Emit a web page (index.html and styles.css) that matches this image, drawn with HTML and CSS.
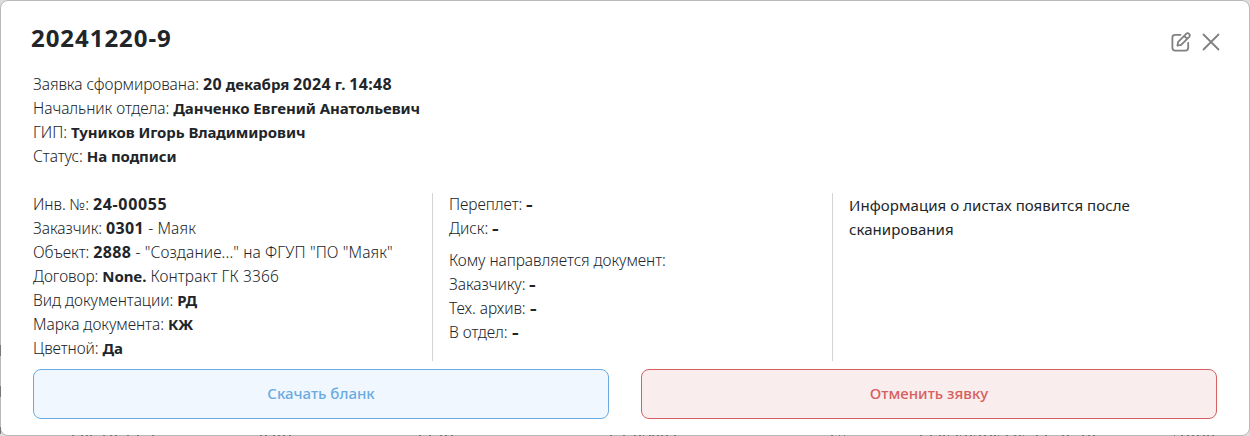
FILE: index.html
```html
<!DOCTYPE html>
<html lang="ru">
<head>
<meta charset="utf-8">
<title>20241220-9</title>
<link rel="stylesheet" href="styles.css">
</head>
<body>
<main class="modal">
  <header class="head">
    <h1 class="title">20241220-9</h1>
    <div class="tools">
      <svg class="edit" viewBox="0 0 20 20"><path d="M9.5 2.8H4.2Q1.4 2.8 1.4 5.6V15.8Q1.4 18.6 4.2 18.6H14.4Q17.2 18.6 17.2 15.8V10.8"/><path d="M6.4 13.6L7.2 9.8L15.2 1.8Q16.7.5 18.1 1.9Q19.5 3.3 18.2 4.8L10.2 12.8ZM13.2 3.8L16.2 6.8"/></svg>
      <svg class="close" viewBox="0 0 18 18"><path d="M1.5 1.5L16.5 16.5M16.5 1.5L1.5 16.5"/></svg>
    </div>
  </header>
  <section class="summary">
    <p class="row">Заявка сформирована: <b><span class="num">20</span> декабря <span class="num">2024</span> г. <span class="num">14:48</span></b></p>
    <p class="row">Начальник отдела: <b>Данченко Евгений Анатольевич</b></p>
    <p class="row">ГИП: <b>Туников Игорь Владимирович</b></p>
    <p class="row">Статус: <b>На подписи</b></p>
  </section>
  <section class="details">
    <div class="col">
      <p class="row">Инв. №: <b class="num code">24-00055</b></p>
      <p class="row">Заказчик: <b class="num">0301</b><span class="object"> - Маяк</span></p>
      <p class="row">Объект: <b class="num">2888</b><span class="object"> - "Создание..." на ФГУП "ПО "Маяк"</span></p>
      <p class="row">Договор: <b>None.</b><span class="object"> Контракт ГК 3366</span></p>
      <p class="row">Вид документации: <b>РД</b></p>
      <p class="row">Марка документа: <b>КЖ</b></p>
      <p class="row">Цветной: <b>Да</b></p>
    </div>
    <div class="col">
      <p class="row">Переплет: <b class="dash">-</b></p>
      <p class="row">Диск: <b class="dash">-</b></p>
      <p class="row group">Кому направляется документ:</p>
      <p class="row">Заказчику: <b class="dash">-</b></p>
      <p class="row">Тех. архив: <b class="dash">-</b></p>
      <p class="row">В отдел: <b class="dash">-</b></p>
    </div>
    <div class="col info">Информация о листах появится после<br>сканирования</div>
  </section>
  <footer class="actions">
    <button class="btn download">Скачать бланк</button>
    <button class="btn cancel">Отменить зявку</button>
  </footer>
</main>
<svg class="backdrop" viewBox="0 0 1250 436">
  <path d="M72 435.5h2m7 0h2m3 0h2m2 0h2m11 0h2m5 0h2m3 0h2m10 0h2m8 0h2m13 0h2M260 435.5h2m3 0h2m6 0h2m3 0h2m3 0h2m4 0h2M419 435.5h2m8 0h2m9 0h2m3 0h2m4 0h2"/>
  <path d="M610 435.5h2m11 0h2m9 0h2m3 0h2m2 0h1m5 0h2m1 0h2m3 0h2m2 0h2m3 0h2m6 0h2M831 435.5h2m6 0h1m4 0h1M920 435.5h2m8 0h2m7 0h2m2 0h2m3 0h1m7 0h2m2 0h1m4 0h2m3 0h2m2 0h1m4 0h2m3 0h2m4 0h2m2 0h2m2 0h1m7 0h2m6 0h2m3 0h2m2 0h1m12 0h2m7 0h2m15 0h2m3 0h2m13 0h2m4 0h2m3 0h2M1174 435.5h1m6 0h2m4 0h2m3 0h2m3 0h2m4 0h2m2 0h2m3 0h2"/>
  <path d="M.5 345v11M.5 386v11M.5 427v7"/>
</svg>
</body>
</html>
```
FILE: styles.css
```css
* { box-sizing: border-box; }
body { margin: 0; width: 1250px; height: 436px; overflow: hidden; background: #ddd; font: 15px/24px "Noto Sans", "Open Sans", sans-serif; color: #212529; }
.modal { height: 436px; border: 1px solid #b9b9b9; border-radius: 8px; background: #fff; padding: 0 32px; }
.head { display: flex; justify-content: space-between; height: 71px; padding-top: 22px; }
.title { margin: 0 0 0 -2px; font-size: 24px; line-height: 30px; font-weight: 700; letter-spacing: 0.95px; }
.tools { display: flex; gap: 11px; padding-top: 9px; margin-right: -3px; }
.tools svg { fill: none; stroke: #808083; stroke-width: 1.8; stroke-linecap: round; stroke-linejoin: round; }
.edit { width: 20px; height: 20px; }
.close { width: 18px; height: 18px; margin-top: 1px; }
.row { margin: 0; height: 24px; white-space: nowrap; font-size: 15.5px; font-weight: 300; letter-spacing: -0.05px; }
.row b { font-size: 15px; font-weight: 700; letter-spacing: -0.08px; }
.row .num { font-size: 16px; line-height: 20px; letter-spacing: 0.35px; }
.row .code { letter-spacing: 0.65px; }
.row .dash { display: inline-block; font-size: 16px; line-height: 20px; transform: scaleX(1.3); transform-origin: left; }
.object { letter-spacing: 0.12px; }
.details { display: grid; grid-template-columns: 400px 400px 1fr; margin: 25px 0 8px; }
.col { height: 168px; }
.col .row:first-child { margin-top: -1px; }
.col + .col { border-left: 1px solid #d3d4d5; padding-left: 16px; margin-left: -1px; }
.col .group { margin-top: 8px; }
.info { letter-spacing: 0.06px; }
.actions { display: grid; grid-template-columns: 1fr 1fr; gap: 32px; }
.btn { height: 50px; border: 1px solid; border-radius: 8px; font: inherit; font-weight: 500; padding: 0 0 2px; }
.download { background: #f0f7ff; color: #6aabe2; }
.cancel { background: #faeded; color: #d66060; }
.backdrop { position: absolute; inset: 0; width: 1250px; height: 436px; fill: none; stroke: #777; pointer-events: none; }
```
